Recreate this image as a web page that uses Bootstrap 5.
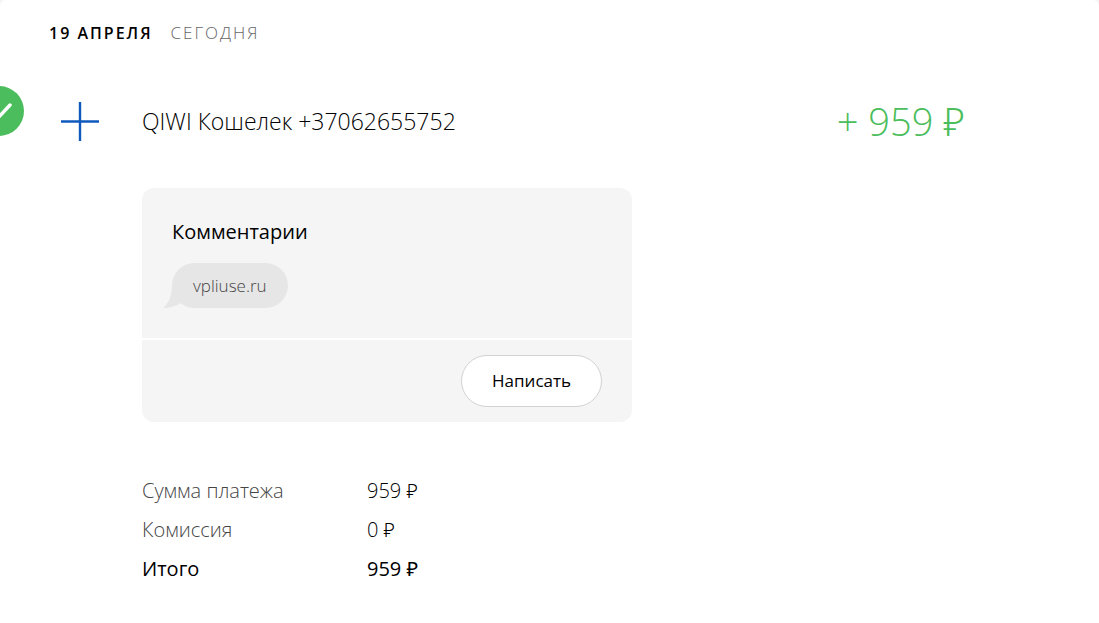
<!DOCTYPE html>
<html lang="ru">
<head>
<meta charset="utf-8">
<meta name="viewport" content="width=device-width, initial-scale=1">
<title>История платежей</title>
<link href="https://cdn.jsdelivr.net/npm/bootstrap@5.3.0/dist/css/bootstrap.min.css" rel="stylesheet">
<style>
  body { font-family: "Open Sans", "Noto Sans", sans-serif; font-weight: 300; color: #000; background: #f5f5f5; }
  .history { min-height: 100vh; border-radius: 6px 6px 0 0; padding: 21px 49px; }
  .date-line { line-height: 24px; letter-spacing: 2px; gap: 18px; }
  .date-line h1 { font-size: 16px; line-height: 24px; font-weight: 600; }
  .muted { color: #444; }
  .date-line .muted { font-size: 17px; color: #666; }
  .payment { padding-top: 54px; }
  .status { left: -26px; top: 86px; }
  .direction { width: 93px; padding-left: 11px; }
  .recipient { font-size: 23px; line-height: 44px; }
  .amount { font-size: 38px; line-height: 44px; color: #4bbd5c; margin-right: 85px; }
  .details { margin-left: 93px; }
  .comments { max-width: 490px; margin-top: 45px; gap: 2px; }
  .comments > div { background: #f5f5f5; }
  .comments-body { padding: 30px; border-radius: 12px 12px 0 0; }
  .comments-foot { padding: 15px 30px; border-radius: 0 0 12px 12px; }
  .comments h2 { font-size: 20px; line-height: 28px; font-weight: 400; margin-bottom: 17px; }
  .bubble { height: 45px; padding: 0 21px; border-radius: 23px; background: #e6e6e6; font-size: 17px; color: #444; }
  .bubble svg { left: -10px; bottom: 0; }
  .btn-write { height: 52px; padding: 0 30px; border: 1px solid #d2d2d2; border-radius: 26px; background: #fff; color: #000; font-size: 17px; }
  .totals { width: auto; margin-top: 49px; font-size: 20px; line-height: 39px; }
  .totals th { width: 225px; padding: 0; font-weight: 300; }
  .totals td { padding: 0; }
  .totals .sum th, .totals .sum td { font-weight: 400; }
</style>
</head>
<body>
<main class="history bg-white position-relative overflow-hidden">
  <header class="date-line d-flex text-uppercase">
    <h1 class="mb-0">19 апреля</h1>
    <span class="muted">Сегодня</span>
  </header>
  <svg class="status position-absolute" width="50" height="50" viewBox="0 0 50 50" role="img" aria-label="Выполнен">
    <circle cx="25" cy="25" r="25" fill="#4bbd5c"/>
    <path d="M14 26l8 8 14-15" fill="none" stroke="#fff" stroke-width="3.5" stroke-linecap="round" stroke-linejoin="round"/>
  </svg>
  <article>
    <div class="payment d-flex align-items-center">
      <div class="direction flex-shrink-0">
        <svg class="d-block" width="40" height="40" viewBox="0 0 40 40" aria-hidden="true"><path d="M1 20.5h38M20 1v39" stroke="#0f59bd" stroke-width="2.4"/></svg>
      </div>
      <div class="recipient flex-grow-1">QIWI Кошелек +37062655752</div>
      <div class="amount text-nowrap">+ 959 ₽</div>
    </div>
    <div class="details">
      <section class="comments d-flex flex-column">
        <div class="comments-body">
          <h2>Комментарии</h2>
          <div class="bubble d-inline-flex align-items-center position-relative">
            <svg class="position-absolute" width="20" height="24" viewBox="0 0 20 24" aria-hidden="true"><path d="M10 0C10 12 7 19 1 24Q11 24 19 19L20 0Z" fill="#e6e6e6"/></svg>
            <span class="position-relative">vpliuse.ru</span>
          </div>
        </div>
        <div class="comments-foot d-flex justify-content-end">
          <button type="button" class="btn btn-write">Написать</button>
        </div>
      </section>
      <table class="totals">
        <tbody>
          <tr><th scope="row" class="muted">Сумма платежа</th><td>959 ₽</td></tr>
          <tr><th scope="row" class="muted">Комиссия</th><td>0 ₽</td></tr>
          <tr class="sum"><th scope="row">Итого</th><td>959 ₽</td></tr>
        </tbody>
      </table>
    </div>
  </article>
</main>
<script src="https://cdn.jsdelivr.net/npm/bootstrap@5.3.0/dist/js/bootstrap.bundle.min.js"></script>
</body>
</html>
